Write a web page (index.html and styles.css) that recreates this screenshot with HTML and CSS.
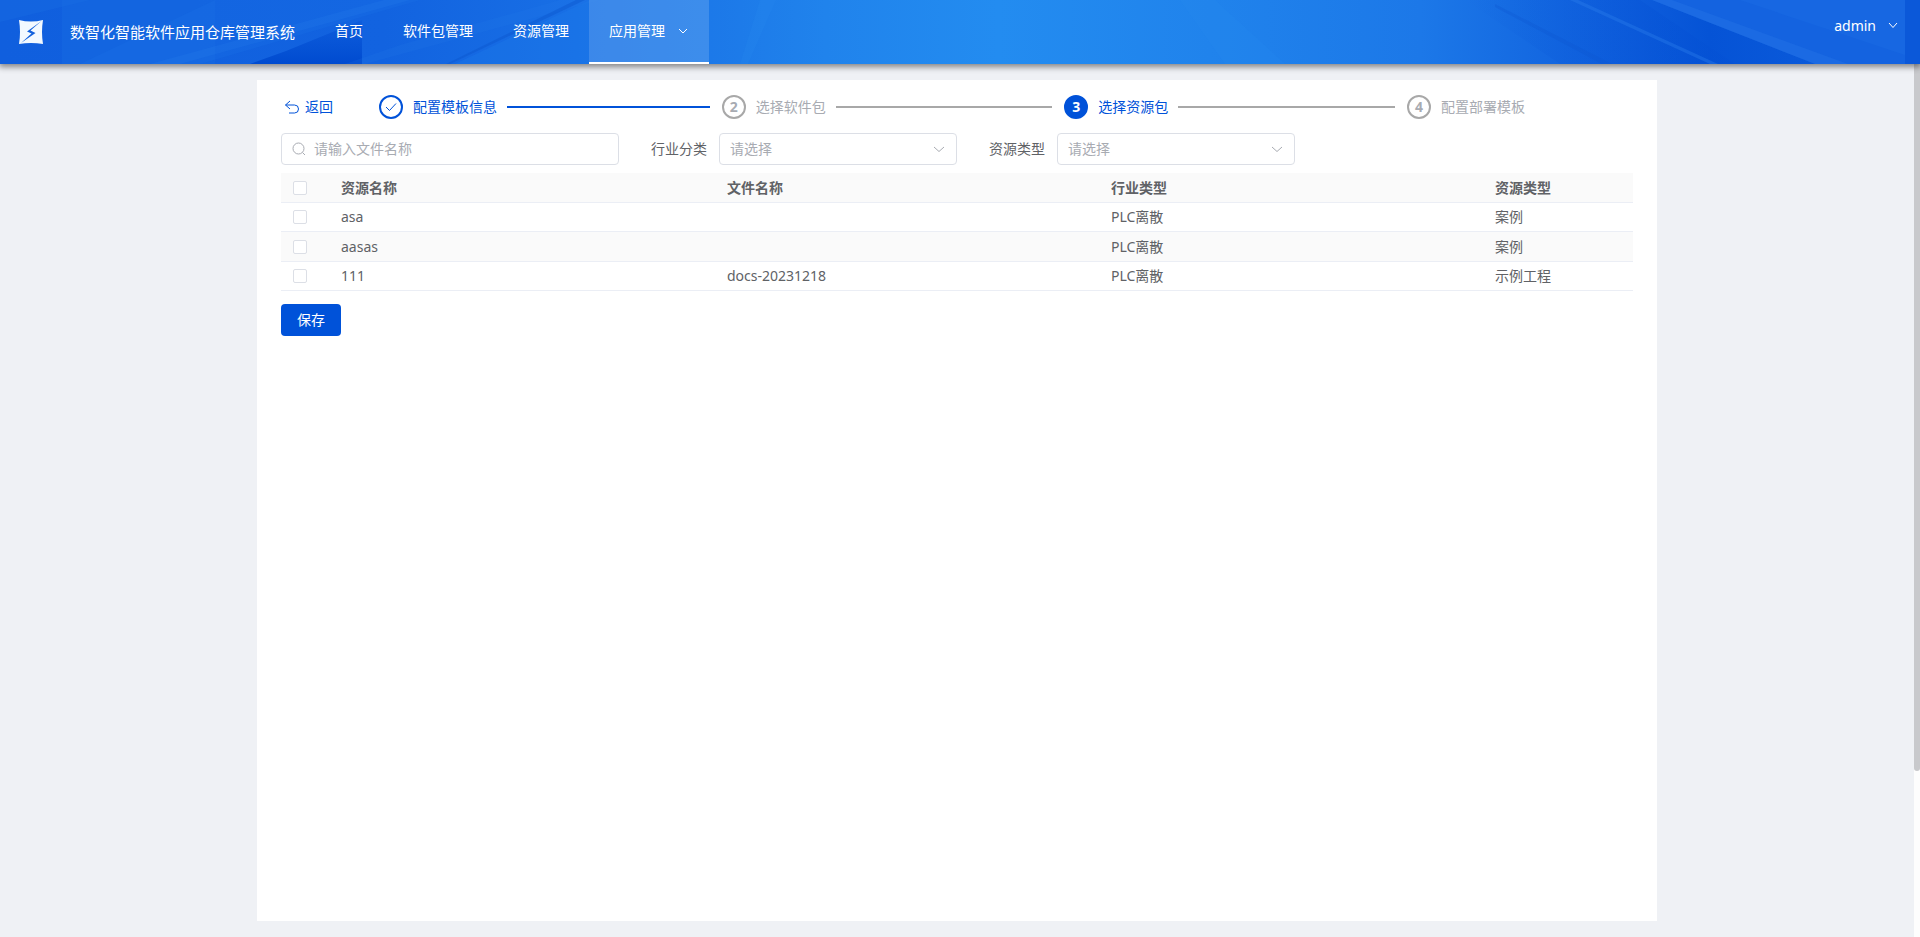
FILE: index.html
```html
<!DOCTYPE html>
<html lang="zh-CN">
<head>
<meta charset="utf-8">
<meta name="viewport" content="width=device-width, initial-scale=1">
<title>数智化智能软件应用仓库管理系统</title>
<link rel="stylesheet" href="styles.css">
</head>
<body>
<header class="header">
  <svg class="header-art" viewBox="0 0 1920 64" preserveAspectRatio="none" aria-hidden="true">
    <defs>
      <linearGradient id="base" x1="0" y1="0" x2="1" y2="0">
        <stop offset="0" stop-color="#105fde"/>
        <stop offset="0.2" stop-color="#1263e0"/>
        <stop offset="0.3" stop-color="#186fe5"/>
        <stop offset="0.37" stop-color="#1c78e8"/>
        <stop offset="0.43" stop-color="#2083ec"/>
        <stop offset="0.52" stop-color="#238cf0"/>
        <stop offset="0.63" stop-color="#2083ec"/>
        <stop offset="0.74" stop-color="#1c78e8"/>
        <stop offset="0.84" stop-color="#0f5fdd"/>
        <stop offset="0.89" stop-color="#0553d6"/>
        <stop offset="1" stop-color="#0f60de"/>
      </linearGradient>
      <linearGradient id="fade" x1="0" y1="0" x2="1" y2="0">
        <stop offset="0" stop-color="#0450d4" stop-opacity="0"/>
        <stop offset="1" stop-color="#0450d4"/>
      </linearGradient>
      <linearGradient id="rise" x1="0" y1="1" x2="0" y2="0">
        <stop offset="0" stop-color="#004bd0"/>
        <stop offset="1" stop-color="#0450d4" stop-opacity="0.3"/>
      </linearGradient>
    </defs>
    <rect width="1920" height="64" fill="url(#base)"/>
    <path d="M62 0H215V64H62Z" fill="#1b72e6" opacity=".3"/>
    <path d="M215 0H420L200 64H80Z" fill="#1b72e6" opacity=".25"/>
    <path d="M0 22L90 0H0Z" fill="#1b72e6" opacity=".3"/>
    <path d="M250 64L286 51L362 20V64Z" fill="url(#rise)"/>
    <path d="M180 64L410 0H384L150 64Z" fill="#2a80ee" opacity=".22"/>
    <path d="M345 64L400 45L560 0H600L365 64Z" fill="#2a80ee" opacity=".15"/>
    <path d="M455 64L590 0H720V64Z" fill="#1f7dec" opacity=".3"/>
    <path d="M450 64L585 0H576L446 64Z" fill="#0b56cf" opacity=".45"/>
    <path d="M748 64L776 0H760L740 64Z" fill="#2a8af2" opacity=".2"/>
    <path d="M1180 0L1225 64H1285L1215 0Z" fill="#2a8af2" opacity=".2"/>
    <path d="M1465 0L1560 64H1735L1640 0Z" fill="url(#fade)" opacity=".4"/>
    <path d="M1495 4L1612 64H1602L1495 7Z" fill="#0d55cf" opacity=".3"/>
    <path d="M1578 0L1718 64H1710L1570 0Z" fill="#2b7dec" opacity=".4"/>
    <path d="M1652 0L1815 64H1920V0Z" fill="#1463e0"/>
    <path d="M1652 0L1815 64H1848L1672 0Z" fill="#2271e6" opacity=".5"/>
    <path d="M1740 0L1905 55V0Z" fill="#1c6de6" opacity=".4"/>
    <path d="M1905 0H1920V64H1905Z" fill="#0552d4" opacity=".6"/>
  </svg>
  <div class="header-bar">
    <svg class="logo" viewBox="0 0 24 24" aria-hidden="true">
      <path d="M0 0Q12 3 24 0Q22 12 24 24Q12 22 0 24Q2 12 0 0Z" fill="#f2f9ff"/>
      <path d="M22.500 1L8 11.500L12.500 13.500L2 23L16.500 13L11.500 10.500Z" fill="#1261dd"/>
    </svg>
    <h1 class="title">数智化智能软件应用仓库管理系统</h1>
    <nav class="nav">
      <a class="nav-item" href="#">首页</a>
      <a class="nav-item" href="#">软件包管理</a>
      <a class="nav-item" href="#">资源管理</a>
      <a class="nav-item nav-item-active" href="#">应用管理
        <svg class="icon-chevron" viewBox="0 0 12 12"><path d="M2 4L6 8L10 4"/></svg>
      </a>
    </nav>
    <button class="user" type="button">admin
      <svg class="icon-chevron" viewBox="0 0 12 12"><path d="M2 3L6 7.500L10 3"/></svg>
    </button>
  </div>
</header>
<div class="body">
  <main class="main">
    <section class="card">
      <div class="top">
        <a class="back" href="#">
          <svg class="icon-back" viewBox="0 0 16 16"><path d="M6 2L1.500 6L6 10M1.500 6H10.500A4 4 0 0 1 10.500 14H5"/></svg>
          返回
        </a>
        <ol class="steps">
          <li class="step step-done">
            <span class="step-mark"><svg class="icon-check" viewBox="0 0 12 12"><path d="M1 6L4.500 9.500L11 2.500"/></svg></span>
            <span>配置模板信息</span>
            <span class="step-line"></span>
          </li>
          <li class="step"><span class="step-mark">2</span><span>选择软件包</span><span class="step-line"></span></li>
          <li class="step step-current"><span class="step-mark">3</span><span>选择资源包</span><span class="step-line"></span></li>
          <li class="step"><span class="step-mark">4</span><span>配置部署模板</span></li>
        </ol>
      </div>
      <form class="filters">
        <label class="search">
          <svg class="icon-search" viewBox="0 0 14 14"><circle cx="6.500" cy="6.500" r="5.500"/><path d="M10.500 10.500L13 13"/></svg>
          <input class="search-input" type="text" placeholder="请输入文件名称" aria-label="请输入文件名称">
        </label>
        <label class="field-label" for="industry">行业分类</label>
        <span class="select-box">
          <select class="select" id="industry"><option>请选择</option></select>
          <svg class="icon-chevron select-arrow" viewBox="0 0 12 12"><path d="M1 4L6 8.500L11 4"/></svg>
        </span>
        <label class="field-label" for="kind">资源类型</label>
        <span class="select-box">
          <select class="select" id="kind"><option>请选择</option></select>
          <svg class="icon-chevron select-arrow" viewBox="0 0 12 12"><path d="M1 4L6 8.500L11 4"/></svg>
        </span>
      </form>
      <table class="table">
        <colgroup><col class="col-check"><col class="col-name"><col class="col-wide"><col class="col-wide"><col class="col-last"></colgroup>
        <thead>
          <tr><th><input class="check" type="checkbox" aria-label="全选"></th><th>资源名称</th><th>文件名称</th><th>行业类型</th><th>资源类型</th></tr>
        </thead>
        <tbody>
          <tr><td><input class="check" type="checkbox" aria-label="asa"></td><td>asa</td><td></td><td>PLC离散</td><td>案例</td></tr>
          <tr><td><input class="check" type="checkbox" aria-label="aasas"></td><td>aasas</td><td></td><td>PLC离散</td><td>案例</td></tr>
          <tr><td><input class="check" type="checkbox" aria-label="111"></td><td>111</td><td>docs-20231218</td><td>PLC离散</td><td>示例工程</td></tr>
        </tbody>
      </table>
      <button class="save" type="button">保存</button>
    </section>
  </main>
  <div class="scrollbar"><div class="scrollbar-thumb"></div></div>
</div>
</body>
</html>
```
FILE: styles.css
```css
* {
  box-sizing: border-box;
}

body {
  margin: 0;
  height: 100vh;
  display: flex;
  flex-direction: column;
  background: #eff1f5;
  color: #606266;
  font: 14px/20px "Noto Sans", "Noto Sans CJK SC", sans-serif;
}

a {
  color: inherit;
  text-decoration: none;
}

button,
input,
select {
  font: inherit;
}

svg {
  display: block;
  flex: none;
}

.header {
  position: relative;
  z-index: 1;
  flex: none;
  height: 64px;
  color: #fff;
  box-shadow: 0 2px 6px 1px rgba(0, 0, 0, 0.45);
}

.header-art {
  position: absolute;
  inset: 0;
  width: 100%;
  height: 100%;
}

.header-bar {
  position: relative;
  display: flex;
  align-items: center;
  height: 100%;
  padding: 0 19px;
}

.logo {
  width: 24px;
  height: 24px;
}

.title {
  margin: 0 20px 0 27px;
  font-size: 15px;
  font-weight: 400;
  line-height: 24px;
}

.nav {
  display: flex;
  align-self: stretch;
}

.nav-item {
  display: flex;
  align-items: center;
  gap: 12px;
  padding: 0 20px 3px;
}

.nav-item-active {
  padding-bottom: 1px;
  border-bottom: 2px solid #fff;
  background: rgba(255, 255, 255, 0.15);
}

.icon-chevron {
  width: 12px;
  height: 12px;
  fill: none;
  stroke: currentColor;
  stroke-width: 1;
}

.user {
  display: flex;
  align-items: center;
  gap: 11px;
  margin-left: auto;
  padding: 0 2px 12px;
  border: 0;
  background: none;
  color: #fff;
}

.body {
  display: flex;
  flex: 1;
  min-height: 0;
}

.main {
  display: flex;
  flex: 1;
  justify-content: center;
  padding: 16px;
}

.card {
  width: 100%;
  max-width: 1400px;
  padding: 15px 24px;
  background: #fff;
}

.top {
  display: flex;
  align-items: center;
}

.back {
  display: flex;
  align-items: center;
  gap: 5px;
  width: 98px;
  padding-left: 3px;
  color: #0052d9;
}

.icon-back {
  width: 16px;
  height: 16px;
  fill: none;
  stroke: currentColor;
  stroke-width: 1;
}

.steps {
  display: flex;
  flex: 1;
  gap: 12px;
  margin: 0;
  padding: 0 108px 0 0;
  list-style: none;
}

.step {
  display: flex;
  flex: 1;
  align-items: center;
  gap: 10px;
  color: #a8abb2;
  white-space: nowrap;
}

.step:last-child {
  flex: none;
}

.step-mark {
  display: flex;
  flex: none;
  align-items: center;
  justify-content: center;
  width: 24px;
  height: 24px;
  border: 2px solid #a8a8a8;
  border-radius: 50%;
  font-weight: 700;
}

.step-line {
  flex: 1;
  height: 2px;
  background: #a8a8a8;
}

.step-done,
.step-current {
  color: #0052d9;
}

.step-done .step-mark {
  border-color: #0052d9;
}

.step-done .step-line {
  background: #0052d9;
}

.step-current .step-mark {
  border-color: #0052d9;
  background: #0052d9;
  color: #fff;
}

.icon-check {
  width: 12px;
  height: 12px;
  fill: none;
  stroke: currentColor;
  stroke-width: 1;
}

.filters {
  display: flex;
  align-items: center;
  margin: 14px 0 8px;
}

.search {
  display: flex;
  flex: 0 1 338px;
  align-items: center;
  gap: 8px;
  height: 32px;
  padding: 0 10px;
  border: 1px solid #dcdfe6;
  border-radius: 4px;
  color: #a8abb2;
}

.icon-search {
  width: 14px;
  height: 14px;
  fill: none;
  stroke: currentColor;
  stroke-width: 1;
}

.search-input {
  flex: 1;
  min-width: 0;
  padding: 0;
  border: 0;
  outline: 0;
  background: none;
  color: #606266;
}

.search-input::placeholder {
  color: #a8abb2;
}

.field-label {
  margin: 0 12px 0 32px;
}

.select-box {
  position: relative;
  flex: 0 1 238px;
}

.select {
  display: block;
  width: 100%;
  height: 32px;
  padding: 0 32px 0 10px;
  border: 1px solid #dcdfe6;
  border-radius: 4px;
  appearance: none;
  background: #fff;
  color: #a8abb2;
}

.select-arrow {
  position: absolute;
  top: 10px;
  right: 12px;
  color: #a8abb2;
  pointer-events: none;
}

.table {
  width: 100%;
  border-collapse: separate;
  border-spacing: 0;
  table-layout: fixed;
}

.col-check {
  width: 48px;
}

.col-name {
  width: 386px;
}

.col-wide {
  width: 384px;
}

.table th,
.table td {
  height: 30px;
  padding: 0 12px;
  border-bottom: 1px solid #ebeef5;
  text-align: left;
  vertical-align: middle;
}

.table tbody tr:nth-child(odd) td {
  height: 29px;
}

.table th,
.table tbody tr:nth-child(even) td {
  background: #fafafa;
}

.table th {
  font-weight: 700;
}

.check {
  display: block;
  width: 14px;
  height: 14px;
  margin: 0;
  border: 1px solid #dcdfe6;
  border-radius: 2px;
  appearance: none;
  background: #fff;
}

.check:checked {
  border-color: #0052d9;
  background: #0052d9;
}

.save {
  width: 60px;
  height: 32px;
  margin-top: 13px;
  padding: 0;
  border: 0;
  border-radius: 4px;
  background: #0052d9;
  color: #fff;
}

.scrollbar {
  flex: none;
  width: 6px;
  background: #fdfdfd;
}

.scrollbar-thumb {
  height: 81%;
  border-radius: 0 0 3px 3px;
  background: #c8c9cc;
}
```
